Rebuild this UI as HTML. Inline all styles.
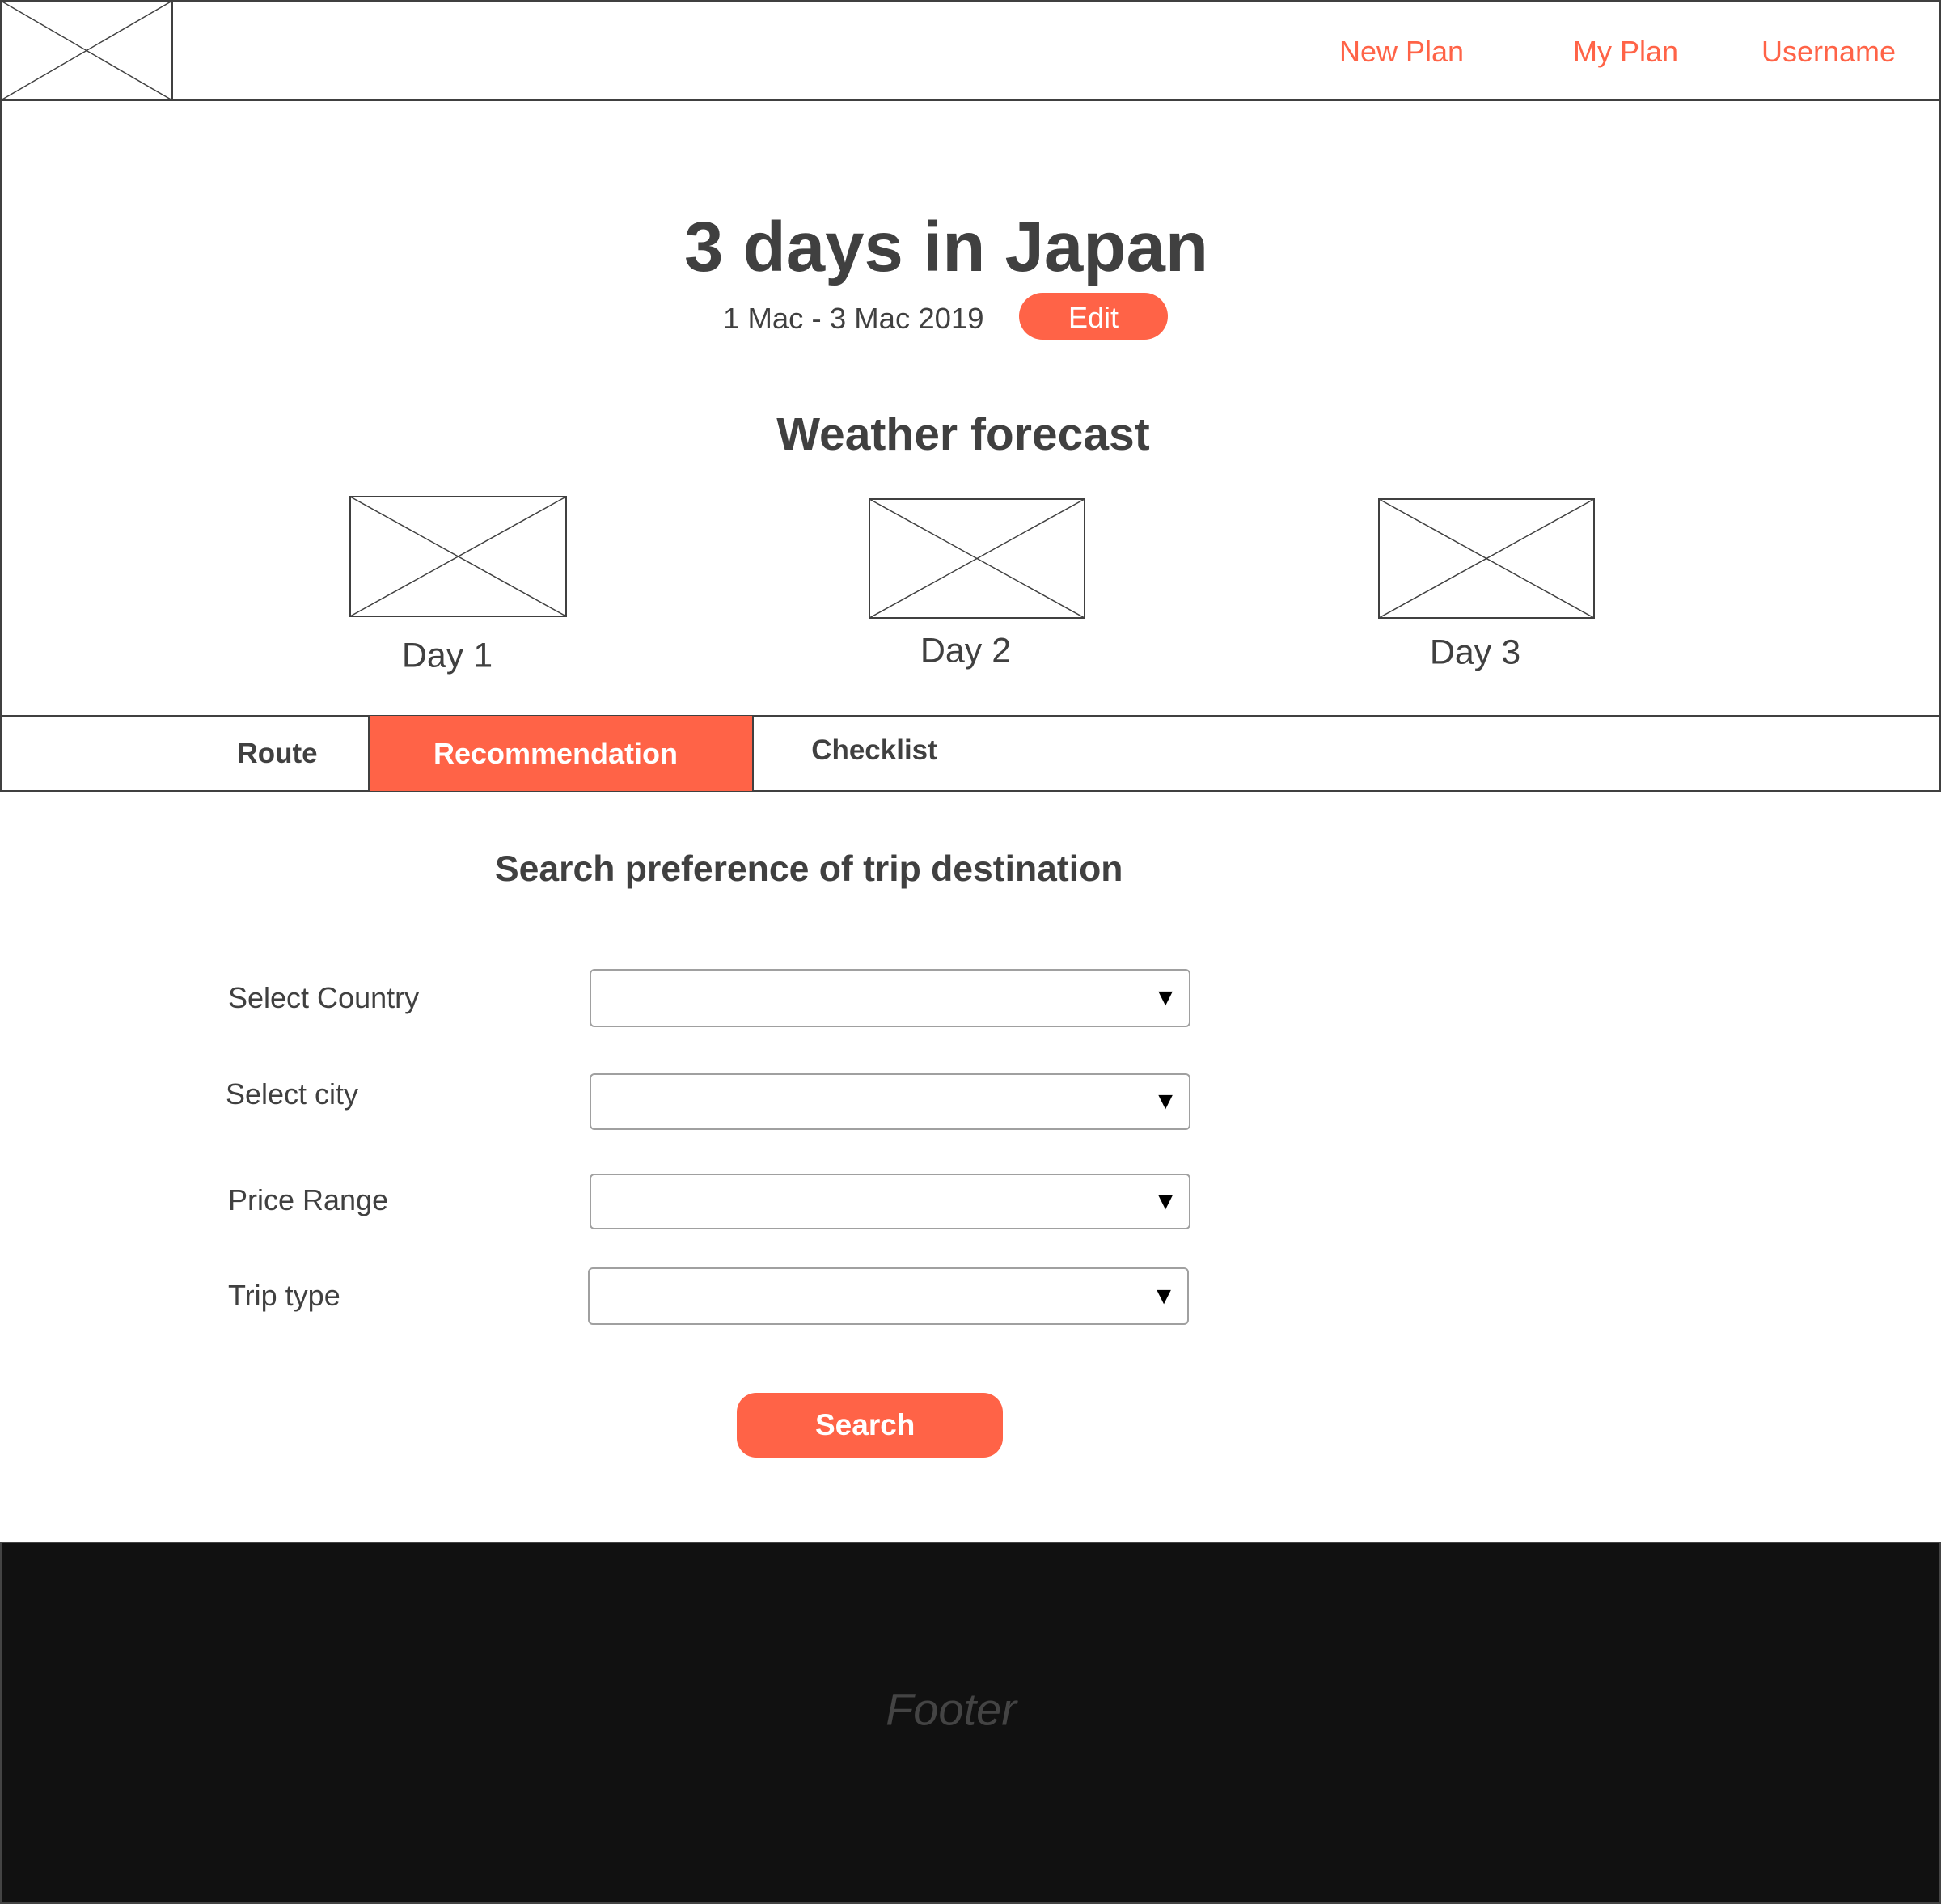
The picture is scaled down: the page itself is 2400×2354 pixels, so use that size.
<!DOCTYPE html>
<html><head><meta charset="utf-8"><style>
*{margin:0;padding:0;box-sizing:border-box}
body{width:2400px;height:2354px;position:relative;background:#fff;font-family:"Liberation Sans",Arial,sans-serif;color:#404040;overflow:hidden}
.a{position:absolute;white-space:nowrap}
.c{transform:translate(-50%,-50%)}
.l{transform:translateY(-50%)}
.nav{color:#ff6347;font-size:37px}
.sel{position:absolute;border:2px solid #a0a0a0;border-radius:6px;background:#fff}
.sel span{position:absolute;right:14px;top:50%;transform:translateY(-50%);font-size:30px;color:#000}
.lab{font-size:36px}
</style></head><body>
<div class="a" style="left:0;top:0;width:2400px;height:979px;border:2px solid #404040"></div>
<div class="a" style="left:0;top:123px;width:2400px;height:2px;background:#404040"></div>
<svg class="a" style="left:0;top:0" width="214" height="125"><rect x="1" y="1" width="212" height="123" fill="none" stroke="#404040" stroke-width="2"/><path d="M1 1L213 124M213 1L1 124" stroke="#404040" stroke-width="1.5"/></svg>
<div class="a nav l" style="left:1656px;top:64px;font-size:36px">New Plan</div>
<div class="a nav l" style="left:1945px;top:64px;font-size:36px">My Plan</div>
<div class="a nav l" style="left:2178px;top:64px;font-size:36px">Username</div>
<div class="a c" style="left:1170px;top:306px;font-size:87px;font-weight:bold">3 days in Japan</div>
<div class="a l" style="left:894px;top:394px;font-size:36.5px">1 Mac - 3 Mac 2019</div>
<div class="a" style="left:1260px;top:362px;width:184px;height:58px;border-radius:29px;background:#ff6347;color:#fff;font-size:36px;text-align:center;line-height:62px">Edit</div>
<div class="a c" style="left:1191px;top:537px;font-size:57px;font-weight:bold">Weather forecast</div>
<svg class="a" style="left:0;top:600px" width="2400" height="180">
<g fill="none" stroke="#404040" stroke-width="2">
<rect x="433" y="14" width="267" height="148"/><path d="M433 14L700 162M700 14L433 162" stroke-width="1.5"/>
<rect x="1075" y="17" width="266" height="147"/><path d="M1075 17L1341 164M1341 17L1075 164" stroke-width="1.5"/>
<rect x="1705" y="17" width="266" height="147"/><path d="M1705 17L1971 164M1971 17L1705 164" stroke-width="1.5"/>
</g></svg>
<div class="a c" style="left:553px;top:811px;font-size:43px">Day 1</div>
<div class="a c" style="left:1194px;top:805px;font-size:43px">Day 2</div>
<div class="a c" style="left:1824px;top:807px;font-size:43px">Day 3</div>
<div class="a" style="left:0;top:884px;width:2400px;height:2px;background:#404040"></div>
<div class="a" style="left:455px;top:885px;width:477px;height:93px;background:#ff6347;border-left:2px solid #404040;border-right:2px solid #404040"></div>
<div class="a c" style="left:343px;top:932px;font-size:35px;font-weight:bold">Route</div>
<div class="a c" style="left:687px;top:932px;font-size:36px;font-weight:bold;color:#fff">Recommendation</div>
<div class="a c" style="left:1081px;top:928px;font-size:35px;font-weight:bold">Checklist</div>
<div class="a l" style="left:612px;top:1075px;font-size:44.5px;font-weight:bold">Search preference of trip destination</div>
<div class="a l lab" style="left:282px;top:1234px">Select Country</div>
<div class="a l lab" style="left:279px;top:1353px">Select city</div>
<div class="a l lab" style="left:282px;top:1484px">Price Range</div>
<div class="a l lab" style="left:282px;top:1602px">Trip type</div>
<div class="sel" style="left:729px;top:1198px;width:743px;height:72px"><span>▼</span></div>
<div class="sel" style="left:729px;top:1327px;width:743px;height:70px"><span>▼</span></div>
<div class="sel" style="left:729px;top:1451px;width:743px;height:69px"><span>▼</span></div>
<div class="sel" style="left:727px;top:1567px;width:743px;height:71px"><span>▼</span></div>
<div class="a" style="left:911px;top:1722px;width:329px;height:80px;border-radius:24px;background:#ff6347;color:#fff;font-size:37px;font-weight:bold;line-height:80px;padding-left:97px">Search</div>
<div class="a" style="left:0;top:1906px;width:2400px;height:448px;background:#111;border:2px solid #444"></div>
<div class="a c" style="left:1176px;top:2113px;font-size:56px;font-style:italic;color:#444">Footer</div>
</body></html>
